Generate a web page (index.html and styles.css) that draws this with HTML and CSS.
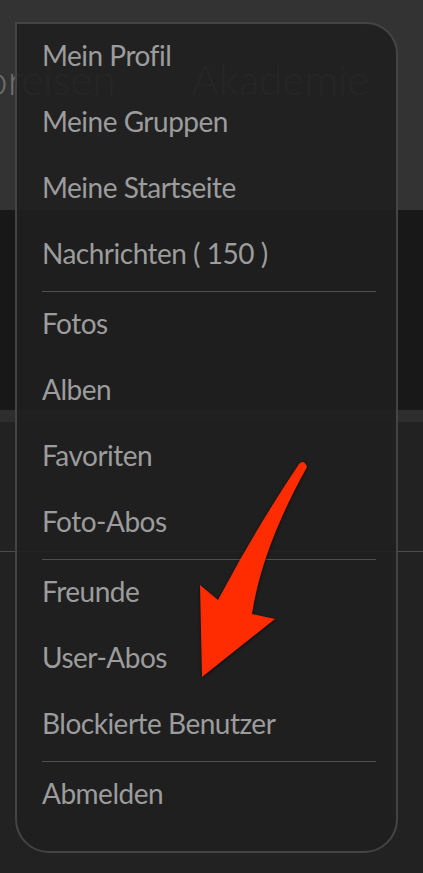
FILE: index.html
```html
<!DOCTYPE html>
<html lang="de">
<head>
    <meta charset="UTF-8">
    <meta name="viewport" content="width=device-width, initial-scale=1.0">
    <title>Profil-Menü</title>
    <link rel="stylesheet" href="styles.css">
</head>
<body>
    <div class="page">
        <header class="header">
            <nav class="nav">
                <span>Fotoreisen</span>
                <span>Akademie</span>
            </nav>
        </header>
        <div class="hero"></div>
        <div class="hero-edge"></div>
        <div class="toolbar"></div>
        <div class="content"></div>

        <ul class="menu">
            <li>Mein Profil</li>
            <li>Meine Gruppen</li>
            <li>Meine Startseite</li>
            <li>Nachrichten ( 150 )</li>
            <li class="divider"></li>
            <li>Fotos</li>
            <li>Alben</li>
            <li>Favoriten</li>
            <li>Foto-Abos</li>
            <li class="divider"></li>
            <li>Freunde</li>
            <li>User-Abos</li>
            <li>Blockierte Benutzer</li>
            <li class="divider"></li>
            <li>Abmelden</li>
        </ul>

        <svg class="arrow" viewBox="0 0 423 873" width="423" height="873">
            <path d="M 299 464 Q 256 528 218 600 L 200 585 L 202 677 L 275 619 L 252 614 Q 262 548 307 467 Q 304 459 299 464 Z" fill="#fe2c00"/>
        </svg>
    </div>
</body>
</html>
```

FILE: styles.css
```css
body {
    margin: 0;
    background: #222;
    font-family: Lato, "Open Sans", sans-serif;
}
.page {
    position: relative;
    width: 423px;
    height: 873px;
    overflow: hidden;
}
.header {
    height: 210px;
    background: #333;
    overflow: hidden;
}
.nav {
    display: flex;
    gap: 76px;
    margin-left: -75px;
    padding-top: 57px;
    font-size: 42px;
    font-weight: 300;
    line-height: 44px;
    color: #6e6e6e;
    white-space: nowrap;
}
.hero {
    height: 200px;
    background: #181818;
}
.hero-edge {
    height: 12px;
    background: #2e2e2e;
}
.toolbar {
    height: 129px;
    background: #222;
    border-bottom: 1px solid #4d4d4d;
}
.menu {
    position: absolute;
    top: 22px;
    left: 15px;
    width: 334px;
    margin: 0;
    padding: 0 20px 23px 25px;
    list-style: none;
    background: rgba(32, 32, 32, 0.92);
    border: 2px solid #444;
    border-radius: 0 32px 34px 34px;
}
.menu li {
    font-size: 28px;
    line-height: 62px;
    padding-bottom: 4px;
    letter-spacing: -0.5px;
    color: #9c9c9c;
    white-space: nowrap;
}
.menu li.divider {
    height: 1px;
    padding: 0;
    margin-top: 3px;
    background: #4f4f4f;
}
.arrow {
    position: absolute;
    top: 0;
    left: 0;
    filter: drop-shadow(0 1px 1.5px rgba(0, 0, 0, 0.7));
}
```
